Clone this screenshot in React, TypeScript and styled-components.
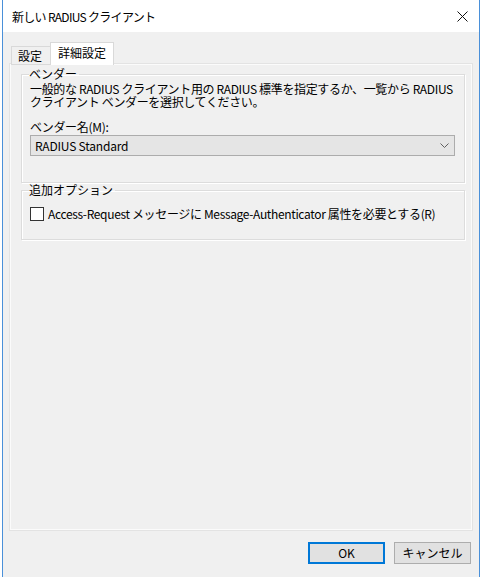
import React from "react";
import styled, { createGlobalStyle } from "styled-components";

const Global = createGlobalStyle`
  html, body { margin: 0; padding: 0; background: #ffffff; }
  body { font-family: "Noto Sans CJK JP", "Noto Sans", sans-serif; font-size: 12px; color: #000; }
  * { box-sizing: border-box; }
`;

const Window = styled.div`
  width: 478px;
  height: 577px;
  margin-left: 2px;
  display: flex;
  flex-direction: column;
  border-left: 1px solid #4a90d9;
  border-right: 1px solid #4a90d9;
  background: #f0f0f0;
`;

const TitleBar = styled.div`
  height: 32px;
  flex: none;
  background: #ffffff;
  display: flex;
  align-items: center;
  justify-content: space-between;
  padding: 0 10px 0 9px;
`;

const Title = styled.span`
  font-size: 12px;
  color: #000;
  letter-spacing: -0.7px;
`;

const CloseIcon = styled.svg`
  width: 11px;
  height: 11px;
  margin-right: 1px;
`;

const Body = styled.div`
  flex: 1;
  display: flex;
  flex-direction: column;
  padding: 11px 7px 0 6px;
`;

const TabStrip = styled.div`
  display: flex;
  align-items: flex-end;
  height: 22px;
  padding-left: 2px;
  position: relative;
  z-index: 1;
`;

const Tab = styled.div<{ $active?: boolean }>`
  height: ${(p) => (p.$active ? 23 : 19)}px;
  padding: ${(p) => (p.$active ? "2px 7px 0 7px" : "1px 8px 0 6px")};
  border: 1px solid #d9d9d9;
  border-bottom: ${(p) => (p.$active ? "none" : "1px solid #d9d9d9")};
  background: ${(p) => (p.$active ? "#ffffff" : "#f0f0f0")};
  margin-left: ${(p) => (p.$active ? "-1px" : "0")};
  font-size: 12px;
  line-height: 16px;
`;

const Pane = styled.div`
  height: 466px;
  margin-top: -1px;
  margin-left: 1px;
  width: 462px;
  border: 1px solid #fbfbfb;
  outline: 1px solid #e3e3e3;
  background: #f0f0f0;
  padding: 3px 6px 0 10px;
  display: flex;
  flex-direction: column;
  gap: 1px;
`;

const Group = styled.fieldset<{ $h: number }>`
  margin: 0;
  height: ${(p) => p.$h}px;
  border: 1px solid #dcdcdc;
  box-shadow: inset 1px 1px 0 #ffffff, 1px 1px 0 #ffffff;
  padding: 0 9px 0 8px;
`;

const Legend = styled.legend`
  padding: 0 2px 0 0;
  margin-left: -1px;
  font-size: 12px;
  line-height: 12px;
  color: #000;
`;

const Description = styled.p`
  margin: 2px 0 0 0;
  font-size: 12px;
  line-height: 13px;
  letter-spacing: -0.35px;
  white-space: nowrap;
`;

const FieldLabel = styled.div`
  margin-top: 12px;
  font-size: 12px;
  line-height: 14px;
  letter-spacing: -0.3px;
`;

const Combo = styled.div`
  margin-top: 1px;
  height: 21px;
  border: 1px solid #acacac;
  background: #e5e5e5;
  display: flex;
  align-items: center;
  justify-content: space-between;
  padding: 0 5px 0 4px;
  font-size: 12px;
  letter-spacing: -0.2px;
`;

const Chevron = styled.svg`
  width: 9px;
  height: 6px;
`;

const CheckRow = styled.label`
  display: flex;
  align-items: center;
  gap: 4px;
  margin-top: 9px;
  font-size: 12px;
  letter-spacing: -0.35px;
  white-space: nowrap;
`;

const Box = styled.span`
  width: 14px;
  height: 14px;
  flex: none;
  border: 1px solid #333333;
  background: #ffffff;
`;

const ButtonRow = styled.div`
  display: flex;
  justify-content: flex-end;
  gap: 9px;
  margin-top: 12px;
  padding-right: 1px;
`;

const Button = styled.button<{ $default?: boolean }>`
  width: 77px;
  height: 22px;
  font-family: "Noto Sans CJK JP", "Noto Sans", sans-serif;
  font-size: 12px;
  color: #000;
  background: #e1e1e1;
  border: ${(p) => (p.$default ? "2px solid #0078d7" : "1px solid #adadad")};
  padding: 0;
  line-height: 16px;
`;

export default function App() {
  return (
    <>
      <Global />
      <Window>
        <TitleBar>
          <Title>新しい RADIUS クライアント</Title>
          <CloseIcon viewBox="0 0 11 11">
            <path d="M0.5 0.5 L10.5 10.5 M10.5 0.5 L0.5 10.5" stroke="#111" strokeWidth="1" fill="none" />
          </CloseIcon>
        </TitleBar>
        <Body>
          <TabStrip>
            <Tab>設定</Tab>
            <Tab $active>詳細設定</Tab>
          </TabStrip>
          <Pane>
            <Group $h={115}>
              <Legend>ベンダー</Legend>
              <Description>
                一般的な RADIUS クライアント用の RADIUS 標準を指定するか、一覧から RADIUS
                <br />
                クライアント ベンダーを選択してください。
              </Description>
              <FieldLabel>ベンダー名(M):</FieldLabel>
              <Combo>
                <span>RADIUS Standard</span>
                <Chevron viewBox="0 0 9 6">
                  <polyline points="0.5,0.5 4.5,4.5 8.5,0.5" stroke="#606060" strokeWidth="1" fill="none" />
                </Chevron>
              </Combo>
            </Group>
            <Group $h={56}>
              <Legend>追加オプション</Legend>
              <CheckRow>
                <Box />
                <span>Access-Request メッセージに Message-Authenticator 属性を必要とする(R)</span>
              </CheckRow>
            </Group>
          </Pane>
          <ButtonRow>
            <Button $default>OK</Button>
            <Button>キャンセル</Button>
          </ButtonRow>
        </Body>
      </Window>
    </>
  );
}
